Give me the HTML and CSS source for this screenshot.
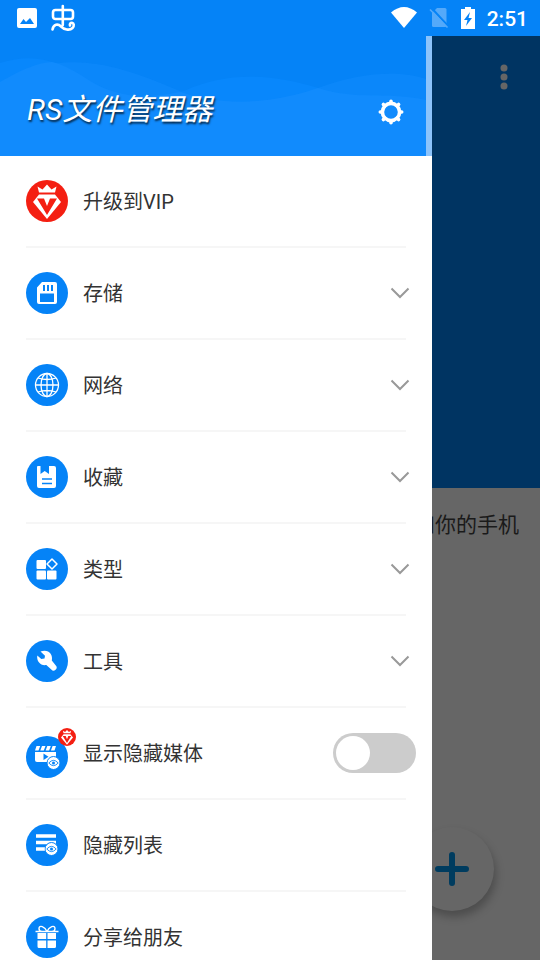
FILE: index.html
```html
<!DOCTYPE html>
<html lang="zh-CN">
<head>
<meta charset="utf-8">
<meta name="viewport" content="width=device-width, initial-scale=1">
<title>RS文件管理器</title>
<link rel="stylesheet" href="styles.css">
</head>
<body>
<svg class="defs" aria-hidden="true">
  <symbol id="chevron" viewBox="0 0 20 12"><path d="M1.500 1.500l8.500 8.500 8.500-8.500" fill="none" stroke="#999" stroke-width="2"/></symbol>
  <symbol id="vip" viewBox="0 0 42 42">
    <circle cx="21" cy="21" r="21" fill="#f41f12"/>
    <path d="M11.500 6.500l5 3L21 4.500l4.500 5 5-3L29 12.500H13z" fill="#fff"/>
    <path d="M13 14.500h16l6 7.500L21 39 7 22z" fill="#fff"/>
    <path d="M11 18.500h7L21 26l3-7.500h7L21 35z" fill="#f41f12"/>
  </symbol>
  <symbol id="eye" viewBox="0 0 14 14">
    <circle cx="7" cy="7" r="6.500" fill="#fff" stroke="#0583f7"/>
    <path d="M2.300 7Q7 1.700 11.700 7 7 12.300 2.300 7z" fill="none" stroke="#0583f7" stroke-width=".9"/>
    <circle cx="7" cy="7" r="1.500" fill="#0583f7"/>
  </symbol>
</svg>
<div class="app">
  <header class="status">
    <div class="status-group">
      <svg width="20" height="20" viewBox="0 0 20 20" role="img" aria-label="图片"><path fill="#fff" fill-rule="evenodd" d="M2 0h16a2 2 0 0 1 2 2v16a2 2 0 0 1-2 2H2a2 2 0 0 1-2-2V2a2 2 0 0 1 2-2zM3 16h14l-4-6-4 4-2.500-3z"/></svg>
      <svg width="26" height="28" viewBox="0 0 26 28" fill="none" stroke="#fff" stroke-width="2.600" stroke-linecap="round" role="img" aria-label="通知"><rect x="3" y="6" width="20" height="9" rx="2.500"/><path d="M12.800 2v19M2.500 25.500c1-5.500 5.500-6 8.500-3s8.500 4.500 11.500 1.500c2-2 1.500-5-.5-5.200-1.600 0-2.500 1.200-2 2.700"/></svg>
    </div>
    <div class="status-group status-right">
      <svg width="26" height="22" viewBox="0 0 26 22" role="img" aria-label="无线网络"><path d="M0 5.500Q13-5.500 26 5.500L13 21z" fill="#fff"/></svg>
      <svg width="20" height="22" viewBox="0 0 20 22" role="img" aria-label="无 SIM 卡"><path d="M8 1h8a1.500 1.500 0 0 1 1.500 1.500v16A1.500 1.500 0 0 1 16 20H4.500A1.500 1.500 0 0 1 3 18.500V6z" fill="#54a9fa"/><path d="M2.500 1l17 18.500" stroke="#0583f7" stroke-width="2"/><path d="M1 2.500l17.500 18" stroke="#54a9fa" stroke-width="1.600"/></svg>
      <svg width="14" height="22" viewBox="0 0 14 22" role="img" aria-label="正在充电"><path d="M4 0h6v2h4v20H0V2h4z" fill="#fff"/><path d="M9 5L3 13h3.500L5 19l6-8H7.500z" fill="#0583f7"/></svg>
      <time>2:51</time>
    </div>
  </header>
  <main class="stage">
    <section class="page">
      <div class="hero">
        <button class="more" aria-label="更多"><svg width="8" height="26" viewBox="0 0 8 26" fill="#666"><circle cx="4" cy="4" r="3.500"/><circle cx="4" cy="13" r="3.500"/><circle cx="4" cy="22" r="3.500"/></svg></button>
      </div>
      <p class="caption">和你的手机</p>
      <button class="fab" aria-label="添加"><svg width="36" height="36" viewBox="0 0 36 36" stroke="#003c5f" stroke-width="6" stroke-linecap="round"><path d="M4 18h28M18 4v28"/></svg></button>
    </section>
    <aside class="drawer">
      <div class="drawer-head">
        <div class="banner">
          <svg class="waves" viewBox="0 0 426 120" preserveAspectRatio="none" aria-hidden="true">
            <path d="M0 27C35 16 58 25 90 45C122 64 150 62 184 55C225 36 270 37 318 52C360 65 385 55 426 64V120H0z" fill="#0887fc"/>
            <path d="M0 46C60 15 105 22 184 57C220 69 265 70 318 52C360 36 400 34 426 43V120H0z" fill="#118bfd" opacity=".55"/>
            <path d="M0 46C25 32 38 27 52 26C65 29 78 37 90 45C122 64 150 62 180 56C220 69 265 70 318 52C360 65 385 55 426 64V120H0z" fill="#118bfd"/>
          </svg>
          <h1>RS文件管理器</h1>
          <button class="settings" aria-label="设置"><svg width="26" height="26" viewBox="0 0 26 26" fill="none" stroke="#fff"><circle cx="13" cy="13" r="8.600" stroke-width="3.600"/><path d="M13 2.300v2M13 21.700v2M2.300 13h2M21.700 13h2M5.400 5.400l1.400 1.400M19.200 19.200l1.400 1.400M5.400 20.600l1.400-1.400M19.200 6.800l1.400-1.400" stroke-width="3.600" stroke-linecap="round"/></svg></button>
        </div>
      </div>
      <ul class="menu">
        <li><a class="row" href="#vip"><svg class="icon"><use href="#vip"/></svg><span class="label">升级到VIP</span></a></li>
        <li><button class="row"><svg class="icon" viewBox="0 0 42 42"><circle cx="21" cy="21" r="21" fill="#0583f7"/><path fill="#fff" fill-rule="evenodd" d="M16 10h13a2 2 0 0 1 2 2v18a2 2 0 0 1-2 2H13a2 2 0 0 1-2-2V15.500zM17 13v6h2v-6zm4 0v6h2v-6zm4 0v6h2v-6zM14 21.500V30h14v-8.500z"/></svg><span class="label">存储</span><svg class="chev"><use href="#chevron"/></svg></button></li>
        <li><button class="row"><svg class="icon" viewBox="0 0 42 42"><circle cx="21" cy="21" r="21" fill="#0583f7"/><g fill="none" stroke="#fff" stroke-width="1.300"><circle cx="21" cy="21" r="11.500"/><ellipse cx="21" cy="21" rx="6" ry="11.500"/><path d="M21 9.500v23M9.500 21h23M12 14q9 3 18 0M12 28q9-3 18 0"/></g></svg><span class="label">网络</span><svg class="chev"><use href="#chevron"/></svg></button></li>
        <li><button class="row"><svg class="icon" viewBox="0 0 42 42"><circle cx="21" cy="21" r="21" fill="#0583f7"/><path fill="#fff" d="M12 10h2.500v8l4.200-3 4.300 3v-8h5a2 2 0 0 1 2 2v18a2 2 0 0 1-2 2H13a2 2 0 0 1-2-2V11a1 1 0 0 1 1-1z"/><path d="M16 23h10M16 27.500h10" stroke="#0583f7" stroke-width="1.600"/></svg><span class="label">收藏</span><svg class="chev"><use href="#chevron"/></svg></button></li>
        <li><button class="row"><svg class="icon" viewBox="0 0 42 42"><circle cx="21" cy="21" r="21" fill="#0583f7"/><g fill="#fff"><rect x="10.500" y="12" width="9.500" height="9" rx="1"/><rect x="10.500" y="22.500" width="9.500" height="9" rx="1"/><rect x="21" y="22.500" width="9.500" height="9" rx="1"/></g><path d="M26 11l5 5-5 5-5-5z" fill="none" stroke="#fff" stroke-width="1.500" stroke-linejoin="round"/></svg><span class="label">类型</span><svg class="chev"><use href="#chevron"/></svg></button></li>
        <li><button class="row"><svg class="icon" viewBox="0 0 42 42"><circle cx="21" cy="21" r="21" fill="#0583f7"/><path fill="#fff" d="M14.500 11.500l4.500 4.200-.5 2.800-3.200.5-4-3.500c-1 6 3.500 10.500 9 9.500l5 4.500a3 3 0 0 0 4.500-4l-4-5c1.500-6-3.500-12-11.300-9z"/></svg><span class="label">工具</span><svg class="chev"><use href="#chevron"/></svg></button></li>
        <li><label class="row"><span class="badged"><svg class="icon" viewBox="0 0 42 42"><circle cx="21" cy="21" r="21" fill="#0583f7"/><path d="M9 16h21v10H11a2 2 0 0 1-2-2z" fill="#fff"/><path d="M10.500 10h3.700l-1.700 4.500H9zm5.500 0h3.500l-1.700 4.500h-3.500zm5.300 0h3.500l-1.700 4.500h-3.500zm5.300 0H30l-1.500 4.500h-3.600z" fill="#fff"/><path d="M17.500 17.500v6.500l5-3.200z" fill="#0583f7"/><use href="#eye" x="20.500" y="20" width="14" height="14"/></svg><svg class="badge"><use href="#vip"/></svg></span><span class="label">显示隐藏媒体</span><input type="checkbox" role="switch" class="switch"></label></li>
        <li><button class="row"><svg class="icon" viewBox="0 0 42 42"><circle cx="21" cy="21" r="21" fill="#0583f7"/><path d="M10 12h20M10 18.500h20M10 25h11" stroke="#fff" stroke-width="3.500"/><use href="#eye" x="18.500" y="18" width="14" height="14"/></svg><span class="label">隐藏列表</span></button></li>
        <li><button class="row"><svg class="icon" viewBox="0 0 42 42"><circle cx="21" cy="21" r="21" fill="#0583f7"/><path fill="#fff" d="M11.500 17h8.700v6h-8.700zm10 0h8.500v6h-8.500zm-10 7.500h8.700V32h-7.200a1.500 1.500 0 0 1-1.500-1.500zm10 0h8.500v6a1.500 1.500 0 0 1-1.500 1.500h-7z"/><path d="M9.500 15.500h23M21 15.500c-2-5-8-7-8-3 0 1.500 1 3 3 3M21 15.500c2-5 8-7 8-3 0 1.500-1 3-3 3" fill="none" stroke="#fff" stroke-width="1.400"/></svg><span class="label">分享给朋友</span></button></li>
      </ul>
    </aside>
  </main>
</div>
</body>
</html>
```
FILE: styles.css
```css
* { box-sizing: border-box; }

body {
  margin: 0;
  font-family: Roboto, "Noto Sans CJK SC", sans-serif;
  color: #333;
}

button {
  padding: 0;
  border: 0;
  background: none;
  color: inherit;
  font: inherit;
  cursor: pointer;
}

svg { display: block; flex: none; }

.defs { position: absolute; width: 0; height: 0; }

.app {
  display: flex;
  flex-direction: column;
  height: 100vh;
  overflow: hidden;
}

.status {
  display: flex;
  justify-content: space-between;
  align-items: center;
  flex: none;
  height: 36px;
  padding: 0 12px 0 17px;
  background: #0583f7;
  color: #fff;
}

.status-group { display: flex; align-items: center; gap: 13px; }

.status-right { gap: 12px; }

.status time { padding-top: 2px; font-size: 21px; font-weight: 500; line-height: 34px; }

.stage { position: relative; flex: 1; min-height: 0; }

.page {
  height: 100%;
  background: #666;
}

.hero {
  display: flex;
  justify-content: flex-end;
  align-items: flex-start;
  height: 452px;
  padding: 28px 32px;
  background: #003462;
}

.caption {
  margin: 0;
  padding: 21px;
  color: #1a1a1a;
  font-size: 21px;
  line-height: 32px;
  text-align: right;
}

.fab {
  position: absolute;
  right: 46px;
  bottom: 49px;
  display: grid;
  place-items: center;
  width: 84px;
  height: 84px;
  border-radius: 50%;
  background: #666;
  box-shadow: 2px 6px 8px rgba(0, 0, 0, .25);
}

.drawer {
  position: absolute;
  inset: 0 auto 0 0;
  width: 80%;
  overflow: hidden;
  background: #fff;
}

.drawer-head { padding-right: 6px; background: #8cc3fb; }

.banner {
  position: relative;
  display: flex;
  justify-content: space-between;
  align-items: center;
  height: 120px;
  padding: 32px 22px 0 27px;
  background: #0583f7;
}

.waves {
  position: absolute;
  inset: 0;
  width: 100%;
  height: 100%;
}

.banner h1 {
  position: relative;
  margin: 0 0 4px;
  color: #fff;
  font-size: 30px;
  font-style: italic;
  font-weight: 400;
  line-height: 40px;
  text-shadow: 1px 2px 2px rgba(0, 0, 0, .7);
}

.settings { position: relative; }

.menu { margin: 0; padding: 0; list-style: none; }

.menu li::after {
  content: "";
  display: block;
  height: 2px;
  margin: 0 26px;
  background: #f6f6f6;
}

.row {
  display: flex;
  align-items: center;
  gap: 15px;
  width: 100%;
  height: 90px;
  padding: 0 22px 0 26px;
  color: #333;
  font-size: 20px;
  line-height: 30px;
  text-align: left;
  text-decoration: none;
}

.label { padding-top: 2px; }

.icon { width: 42px; height: 42px; }

.chev { width: 20px; height: 12px; margin-left: auto; }

.badged {
  position: relative;
  padding-top: 8px;
}

.badge {
  position: absolute;
  top: 0;
  right: -8px;
  width: 18px;
  height: 18px;
}

label.row { padding-right: 16px; }

.switch {
  appearance: none;
  width: 83px;
  height: 40px;
  margin: 0 0 0 auto;
  padding: 3px;
  border-radius: 20px;
  background: #ccc;
}

.switch::before {
  content: "";
  display: block;
  width: 34px;
  height: 34px;
  border-radius: 50%;
  background: #fff;
}

.switch:checked { background: #0583f7; }

.switch:checked::before { margin-left: auto; }
```
